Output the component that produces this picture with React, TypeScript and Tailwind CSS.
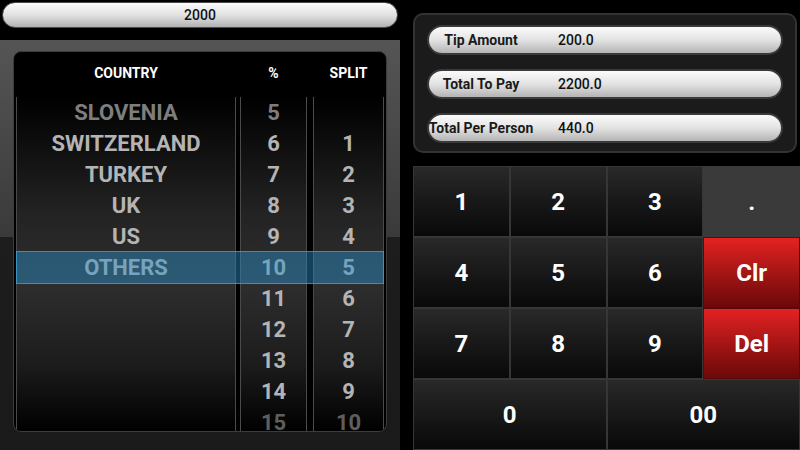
import React from 'react';

const countries = ['SLOVENIA', 'SWITZERLAND', 'TURKEY', 'UK', 'US', 'OTHERS'];
const percents = ['5', '6', '7', '8', '9', '10', '11', '12', '13', '14', '15'];
const splits = ['', '1', '2', '3', '4', '5', '6', '7', '8', '9', '10'];

const results = [
  { label: 'Tip Amount', value: '200.0' },
  { label: 'Total To Pay', value: '2200.0' },
  { label: 'Total Per Person', value: '440.0' },
];

// fade the first and last rows of the wheel
const rowTone = (i: number, n: number) =>
  i === 0 ? 'text-[#7e7e7e]' : i === n - 1 ? 'text-[#5e5e5e]' : 'text-[#b4b4b4]';

function Wheel({ items, width }: { items: string[]; width: string }) {
  return (
    <div
      className={`${width} h-full overflow-hidden border-x border-[#4a4a4a] bg-[linear-gradient(to_bottom,#000_0%,#232323_35%,#2e2e2e_55%,#1c1c1c_80%,#000_100%)] flex flex-col`}
    >
      {items.map((t, i) => (
        <div
          key={i}
          className={`h-[31px] shrink-0 flex items-center justify-center text-[22px] font-bold ${rowTone(i, items.length)}`}
        >
          {t}
        </div>
      ))}
    </div>
  );
}

function Key({ label, kind = 'num', span = false }: { label: string; kind?: 'num' | 'dot' | 'red'; span?: boolean }) {
  const bg =
    kind === 'red'
      ? 'bg-gradient-to-b from-[#e42222] to-[#6c0909] border-[#5a0a0a]'
      : kind === 'dot'
      ? 'bg-[#3a3a3a] border-[#3a3a3a]'
      : 'bg-gradient-to-b from-[#292929] to-[#090909] border-[#363636]';
  return (
    <div
      className={`${span ? 'col-span-2' : ''} border ${bg} flex items-center justify-center text-white font-bold text-[24px]`}
    >
      {label}
    </div>
  );
}

export default function App() {
  return (
    <div className="w-[800px] h-[450px] bg-black flex overflow-hidden font-['Roboto','Liberation_Sans',sans-serif]">
      {/* left: amount + picker */}
      <div className="w-[400px] h-full flex flex-col">
        <div className="h-[40px] shrink-0 pt-[2px] px-[2px]">
          <div className="h-[26px] rounded-full border border-[#4a4a4a] bg-gradient-to-b from-[#fbfbfb] via-[#e2e2e2] to-[#b2b2b2] flex items-center justify-center text-[14px] font-medium text-[#111]">
            2000
          </div>
        </div>
        <div className="flex-1 min-h-0 pt-[11px] px-[13px] pb-[18px] bg-[linear-gradient(to_bottom,#555_0%,#3a3a3a_48%,#1d1d1d_48%,#1a1a1a_100%)]">
          <div className="relative h-full rounded-[8px] border border-[#3c3c3c] bg-black px-[2px] flex flex-col overflow-hidden">
            <div className="h-[42px] shrink-0 flex items-center text-white font-bold text-[14px]">
              <div className="w-[220px] text-center">COUNTRY</div>
              <div className="w-[4px]" />
              <div className="w-[67px] text-center">%</div>
              <div className="w-[6px]" />
              <div className="w-[71px] text-center">SPLIT</div>
            </div>
            <div className="flex-1 min-h-0 flex pt-[3px]">
              <Wheel items={countries.concat(['', '', '', '', ''])} width="w-[220px]" />
              <div className="w-[4px]" />
              <Wheel items={percents} width="w-[67px]" />
              <div className="w-[6px]" />
              <Wheel items={splits} width="w-[71px]" />
            </div>
            {/* selection band */}
            <div className="absolute left-[2px] right-[2px] top-[199px] h-[33px] bg-[#2a8fc8]/45 border border-[#3aa6e0]/70" />
          </div>
        </div>
      </div>

      {/* right: results + keypad */}
      <div className="w-[400px] h-full pl-[13px] pt-[13px] flex flex-col">
        <div className="h-[140px] shrink-0 mr-[3px] rounded-[10px] border-2 border-[#333] bg-[#1b1b1b] px-[12px] pt-[10px] flex flex-col gap-[14px]">
          {results.map((r) => (
            <div
              key={r.label}
              className="h-[30px] shrink-0 rounded-full border-2 border-[#3a3a3a] bg-gradient-to-b from-[#fbfbfb] via-[#e3e3e3] to-[#b4b4b4] flex items-center"
            >
              <div className="w-[104px] flex justify-center">
                <span className="shrink-0 whitespace-nowrap text-[14px] font-bold text-[#1a1a1a]">{r.label}</span>
              </div>
              <span className="ml-[25px] text-[14px] font-medium text-[#111]">{r.value}</span>
            </div>
          ))}
        </div>
        <div className="mt-[13px] flex-1 min-h-0 grid grid-cols-4 grid-rows-4">
          <Key label="1" />
          <Key label="2" />
          <Key label="3" />
          <Key label="." kind="dot" />
          <Key label="4" />
          <Key label="5" />
          <Key label="6" />
          <Key label="Clr" kind="red" />
          <Key label="7" />
          <Key label="8" />
          <Key label="9" />
          <Key label="Del" kind="red" />
          <Key label="0" span />
          <Key label="00" span />
        </div>
      </div>
    </div>
  );
}
